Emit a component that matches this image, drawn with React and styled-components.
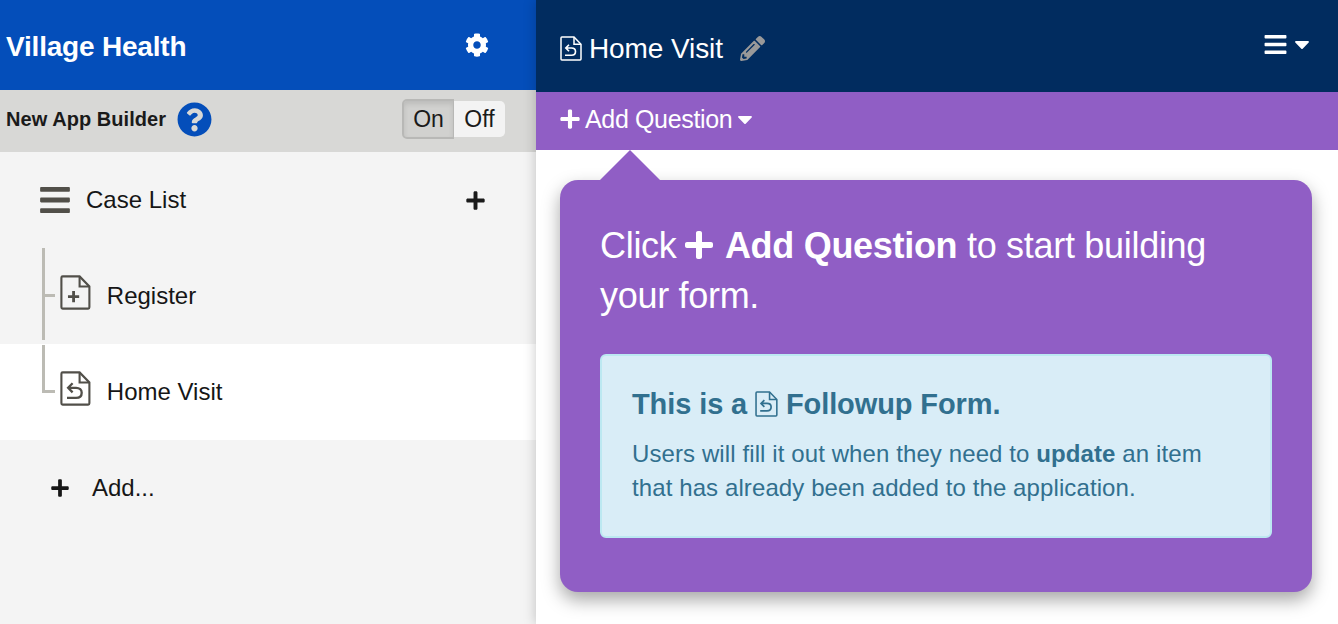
import React from "react";
import styled, { createGlobalStyle } from "styled-components";
import { FaBars, FaCaretDown, FaCog, FaPencilAlt, FaPlus, FaQuestionCircle } from "react-icons/fa";

const GlobalStyle = createGlobalStyle`
  html, body {
    margin: 0;
    padding: 0;
    background: #fff;
    overflow: hidden;
  }
  * { box-sizing: border-box; }
`;

function FileIcon({ size = 32, kind = "back", strokeWidth = 1.5 }) {
  return (
    <svg width={size * 0.88} height={size} viewBox="0 0 22 25" fill="none" stroke="currentColor" strokeWidth={strokeWidth} style={{ flex: "none" }}>
      <path d="M1.9 1H14L21 8.2V23.1C21 23.6 20.6 24 20.1 24H1.9C1.4 24 1 23.6 1 23.1V1.9C1 1.4 1.4 1 1.9 1Z" />
      <path d="M14 1V8.2H21" />
      {kind === "plus" ? (
        <path d="M9.7 11.5V19.5M5.7 15.5H13.7" strokeWidth={strokeWidth * 1.35} />
      ) : (
        <path d="M9 8.7L5.8 12L9 15.3M5.8 12H11.5C14 12 15.5 13.5 15.5 15.5C15.5 17.7 14 19.2 11.5 19.2H5" strokeWidth={strokeWidth * 1.1} />
      )}
    </svg>
  );
}

export default function App() {
  return (
    <Page>
      <GlobalStyle />
      <Sidebar>
        <AppHeader>
          <AppName>Village Health</AppName>
          <FaCog size={24} />
        </AppHeader>
        <BuilderBar>
          <BuilderLabel>New App Builder</BuilderLabel>
          <HelpIcon><FaQuestionCircle size={35} /></HelpIcon>
          <Toggle>
            <ToggleOn>On</ToggleOn>
            <ToggleOff>Off</ToggleOff>
          </Toggle>
        </BuilderBar>
        <CaseRow>
          <BarsIcon><FaBars size={34} /></BarsIcon>
          <RowText>Case List</RowText>
          <RowPlus><FaPlus size={21} /></RowPlus>
        </CaseRow>
        <FormRow $first>
          <FormIcon><FileIcon kind="plus" size={35} /></FormIcon>
          <RowText>Register</RowText>
        </FormRow>
        <FormRow $active>
          <FormIcon><FileIcon kind="back" size={35} /></FormIcon>
          <RowText>Home Visit</RowText>
        </FormRow>
        <AddRow>
          <FaPlus size={20} />
          <RowText>Add...</RowText>
        </AddRow>
      </Sidebar>
      <Main>
        <MainHeader>
          <FileIcon kind="back" size={25} />
          <FormTitle>Home Visit</FormTitle>
          <PencilIcon><FaPencilAlt size={25} /></PencilIcon>
          <MenuIcon>
            <FaBars size={25} />
            <HeaderCaret><FaCaretDown size={24} /></HeaderCaret>
          </MenuIcon>
        </MainHeader>
        <QuestionBar>
          <FaPlus size={22} />
          <span>Add Question</span>
          <BarCaret><FaCaretDown size={24} /></BarCaret>
        </QuestionBar>
        <PopoverArea>
          <Popover>
            <PopoverText>
              Click <FaPlus size={29} /> <strong>Add Question</strong> to start building your form.
            </PopoverText>
            <InfoBox>
              <InfoTitle>
                This is a <FileIcon kind="back" size={26} /> Followup Form.
              </InfoTitle>
              <InfoText>
                Users will fill it out when they need to <strong>update</strong> an item that has already been added to the application.
              </InfoText>
            </InfoBox>
          </Popover>
        </PopoverArea>
      </Main>
    </Page>
  );
}

const Page = styled.div`
  width: 1338px;
  height: 624px;
  display: flex;
  overflow: hidden;
  font-family: "Liberation Sans", Arial, sans-serif;
  color: #1a1a1a;
`;

const Sidebar = styled.div`
  width: 536px;
  flex: none;
  background: #f4f4f4;
  display: flex;
  flex-direction: column;
`;

const AppHeader = styled.div`
  height: 90px;
  padding: 0 47px 0 6px;
  background: #044eba;
  color: #fff;
  display: flex;
  align-items: center;
  justify-content: space-between;
`;

const AppName = styled.div`
  margin-top: 4px;
  font-size: 28px;
  font-weight: 700;
  letter-spacing: -0.2px;
`;

const BuilderBar = styled.div`
  height: 62px;
  padding: 0 31px 4px 6px;
  background: #d8d8d6;
  display: flex;
  align-items: center;
`;

const BuilderLabel = styled.div`
  font-size: 20px;
  font-weight: 700;
  letter-spacing: 0.05px;
`;

const HelpIcon = styled.div`
  margin-left: 11px;
  display: flex;
  color: #044eba;
`;

const Toggle = styled.div`
  margin-left: auto;
  display: flex;
  font-size: 23px;
`;

const ToggleOn = styled.div`
  width: 52px;
  height: 40px;
  background: #d1d1cf;
  border: 2px solid #b8b8b6;
  border-right-width: 1px;
  border-radius: 5px 0 0 5px;
  box-shadow: inset 0 3px 5px rgba(0, 0, 0, 0.1);
  display: flex;
  align-items: center;
  justify-content: center;
`;

const ToggleOff = styled.div`
  width: 51px;
  height: 36px;
  margin-top: 2px;
  background: #f3f3f3;
  border-radius: 0 5px 5px 0;
  display: flex;
  align-items: center;
  justify-content: center;
`;

const RowText = styled.span`
  font-size: 24px;
  color: #161616;
`;

const CaseRow = styled.div`
  height: 96px;
  padding: 0 50px 0 40px;
  display: flex;
  align-items: center;
  ${RowText} {
    margin-left: 16px;
  }
`;

const BarsIcon = styled.div`
  display: flex;
  color: #514f49;
  width: 30px;
  justify-content: center;
  align-items: center;
  overflow: visible;
`;

const RowPlus = styled.div`
  margin-left: auto;
  display: flex;
`;

const FormRow = styled.div`
  position: relative;
  height: 96px;
  padding-left: 60px;
  display: flex;
  align-items: center;
  background: ${(p) => (p.$active ? "#fff" : "transparent")};
  ${RowText} {
    margin-left: 16px;
  }
  &::before {
    content: "";
    position: absolute;
    left: 42px;
    top: ${(p) => (p.$first ? "0" : "1px")};
    height: ${(p) => (p.$first ? "92px" : "47px")};
    width: 3px;
    background: #bcbbb4;
  }
  &::after {
    content: "";
    position: absolute;
    left: 42px;
    top: 46px;
    width: 13px;
    height: 3px;
    background: #bcbbb4;
  }
`;

const FormIcon = styled.div`
  display: flex;
  margin-top: -8px;
  color: #514f49;
`;

const AddRow = styled.div`
  height: 96px;
  padding-left: 50px;
  display: flex;
  align-items: center;
  color: #161616;
  ${RowText} {
    margin-left: 22px;
  }
`;

const Main = styled.div`
  flex: 1;
  position: relative;
  background: #fff;
  display: flex;
  flex-direction: column;
  box-shadow: 0 0 12px rgba(0, 0, 0, 0.22);
`;

const MainHeader = styled.div`
  height: 92px;
  padding: 4px 29px 0 24px;
  background: #012c5f;
  color: #fff;
  display: flex;
  align-items: center;
`;

const FormTitle = styled.div`
  margin-left: 7px;
  margin-top: 1px;
  font-size: 28px;
  letter-spacing: -0.1px;
`;

const PencilIcon = styled.div`
  margin-left: 17px;
  display: flex;
  color: #999;
`;

const MenuIcon = styled.div`
  margin-left: auto;
  margin-top: -8px;
  display: flex;
  align-items: center;
`;

const HeaderCaret = styled.div`
  display: flex;
  margin: 0 -5px 0 2px;
`;

const QuestionBar = styled.div`
  height: 58px;
  padding: 0 0 4px 23px;
  background: #905ec5;
  color: #fff;
  font-size: 25px;
  letter-spacing: -0.35px;
  display: flex;
  align-items: center;
  gap: 4px;
`;

const BarCaret = styled.div`
  display: flex;
  margin-left: -3px;
`;

const PopoverArea = styled.div`
  flex: 1;
  padding: 30px 26px 0 24px;
`;

const Popover = styled.div`
  position: relative;
  height: 412px;
  padding: 41px 40px 0;
  background: #905ec5;
  border-radius: 18px;
  color: #fff;
  box-shadow: 0 8px 18px rgba(0, 0, 0, 0.35);
  &::before {
    content: "";
    position: absolute;
    left: 40px;
    top: -30px;
    border-left: 30px solid transparent;
    border-right: 30px solid transparent;
    border-bottom: 30px solid #905ec5;
  }
`;

const PopoverText = styled.div`
  font-size: 36px;
  line-height: 50px;
  letter-spacing: -0.3px;
  svg {
    width: 32px;
    height: 32px;
    margin-left: -3px;
    vertical-align: -3px;
  }
`;

const InfoBox = styled.div`
  margin-top: 33px;
  height: 184px;
  padding: 30px 30px 0;
  background: #d9edf7;
  border: 2px solid #bce8f1;
  border-radius: 6px;
  color: #31708f;
`;

const InfoTitle = styled.div`
  font-size: 29px;
  font-weight: 700;
  line-height: 36px;
  letter-spacing: -0.1px;
  svg {
    vertical-align: -3px;
  }
`;

const InfoText = styled.div`
  margin-top: 15px;
  font-size: 24px;
  line-height: 34px;
  letter-spacing: 0.1px;
`;
